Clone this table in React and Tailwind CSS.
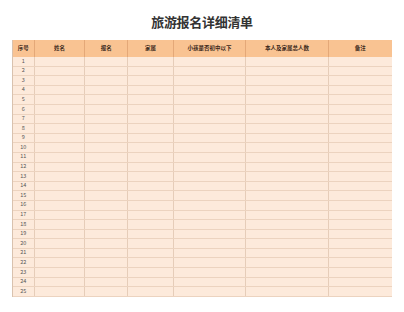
import React from 'react';

const columns = [
  { name: '序号', w: 'w-[21.7px]' },
  { name: '姓名', w: 'w-[50.6px]' },
  { name: '报名', w: 'w-[43px]' },
  { name: '家属', w: 'w-[45.7px]' },
  { name: '小孩是否初中以下', w: 'w-[72.3px]' },
  { name: '本人及家属总人数', w: 'w-[82.4px]' },
  { name: '备注', w: 'flex-1' },
];

const rows = Array.from({ length: 25 }, (_, i) => i + 1);

const App = () => {
  return (
    <div className="w-[404px] h-[312px] bg-white font-['Noto_Sans_CJK_SC',sans-serif]">
      {/* Title */}
      <div className="h-[40px] pt-[14px] flex justify-center">
        <h1 className="text-[13px] leading-[15px] font-bold text-[#333333] tracking-[-0.3px]">旅游报名详细清单</h1>
      </div>

      {/* Table */}
      <div className="mx-[12px] w-[380px] border-l border-[#d9c2ae]">
        {/* Header */}
        <div className="flex h-[17px] bg-[#f9c392]">
          {columns.map((col, i) => (
            <div
              key={col.name}
              className={`${col.w} shrink-0 flex items-center justify-center text-[5.5px] font-bold text-[#3d2a1c] ${i < columns.length - 1 ? 'border-r border-[#e4a878]' : ''}`}
            >
              {col.name}
            </div>
          ))}
        </div>

        {/* Body rows */}
        {rows.map((n) => (
          <div key={n} className="flex h-[9.6px] bg-[#fdeadb] border-b border-[#ecd3bf]">
            {columns.map((col, i) => (
              <div
                key={col.name}
                className={`${col.w} shrink-0 flex items-center justify-center text-[5.5px] leading-none text-[#555555] ${i < columns.length - 1 ? 'border-r border-[#e6cdb9]' : ''}`}
              >
                {i === 0 ? n : ''}
              </div>
            ))}
          </div>
        ))}
      </div>
    </div>
  );
};

export default App;
